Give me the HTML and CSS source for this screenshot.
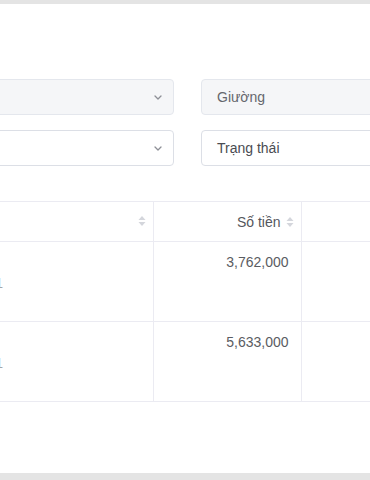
FILE: index.html
```html
<!DOCTYPE html>
<html lang="vi">
<head>
    <meta charset="UTF-8">
    <meta name="viewport" content="width=device-width, initial-scale=1.0">
    <title>Danh sách hóa đơn</title>
    <link rel="stylesheet" href="styles.css">
</head>
<body>
    <div class="page">
        <div class="bar-top"></div>
        <div class="main">
            <div class="filters">
                <div class="select disabled">
                    <span class="select-text"></span>
                    <svg class="chevron" width="8" height="5" viewBox="0 0 8 5"><path d="M1 1l3 3 3-3" fill="none" stroke="#8d8f96" stroke-width="1.3" stroke-linecap="round" stroke-linejoin="round"/></svg>
                </div>
                <div class="select disabled">
                    <span class="select-text muted">Giường</span>
                </div>
                <div class="select">
                    <span class="select-text"></span>
                    <svg class="chevron" width="8" height="5" viewBox="0 0 8 5"><path d="M1 1l3 3 3-3" fill="none" stroke="#8d8f96" stroke-width="1.3" stroke-linecap="round" stroke-linejoin="round"/></svg>
                </div>
                <div class="select">
                    <span class="select-text">Trạng thái</span>
                </div>
            </div>

            <table class="bills">
                <colgroup>
                    <col class="col-room">
                    <col class="col-amount">
                    <col class="col-rest">
                </colgroup>
                <thead>
                    <tr>
                        <th class="th-left">
                            <span class="th-inner">
                                <svg class="caret" width="8" height="12" viewBox="0 0 8 12"><path d="M4 1L7.5 5H0.5Z" fill="#d4d6dc"/><path d="M0.5 7H7.5L4 11Z" fill="#d4d6dc"/></svg>
                            </span>
                        </th>
                        <th class="th-right">
                            <span class="th-inner">Số tiền
                                <svg class="caret" width="8" height="12" viewBox="0 0 8 12"><path d="M4 1L7.5 5H0.5Z" fill="#d4d6dc"/><path d="M0.5 7H7.5L4 11Z" fill="#d4d6dc"/></svg>
                            </span>
                        </th>
                        <th></th>
                    </tr>
                </thead>
                <tbody>
                    <tr>
                        <td><div class="line-main"></div><div class="line-sub">10/11/2021</div></td>
                        <td class="num">3,762,000</td>
                        <td></td>
                    </tr>
                    <tr>
                        <td><div class="line-main"></div><div class="line-sub">10/11/2021</div></td>
                        <td class="num">5,633,000</td>
                        <td></td>
                    </tr>
                </tbody>
            </table>
        </div>
        <div class="bar-bottom"></div>
    </div>
</body>
</html>
```

FILE: styles.css
```css
body {
    margin: 0;
    font-family: "Liberation Sans", Arial, sans-serif;
    font-size: 14px;
    color: #606266;
    background: #fff;
    overflow: hidden;
}
.page {
    height: 480px;
    display: flex;
    flex-direction: column;
}
.bar-top {
    height: 4px;
    background: #e4e4e4;
}
.bar-bottom {
    height: 7px;
    background: #e4e4e4;
}
.main {
    flex: 1;
    padding-top: 75px;
    overflow: hidden;
}
.filters {
    display: grid;
    grid-template-columns: 364px 364px;
    column-gap: 27px;
    row-gap: 15px;
    margin-left: -190px;
}
.select {
    height: 36px;
    box-sizing: border-box;
    border: 1px solid #dcdfe6;
    border-radius: 4px;
    background: #fff;
    display: flex;
    align-items: center;
    padding: 0 11px 0 15px;
}
.select.disabled {
    background: #f5f6f8;
    border-color: #e4e7ed;
}
.select-text {
    flex: 1;
    color: #4a4c52;
}
.select-text.muted {
    color: #65676d;
}
.chevron {
    display: block;
}
.bills {
    margin-top: 35px;
    margin-left: -76px;
    border-collapse: collapse;
    table-layout: fixed;
    width: 600px;
    border-top: 1px solid #ebebf2;
    border-bottom: 1px solid #f0f0f4;
}
.col-room {
    width: 229px;
}
.col-amount {
    width: 148px;
}
.bills th,
.bills td {
    border-bottom: 1px solid #ebebf2;
    border-right: 1px solid #ebebf2;
    padding: 0;
}
.bills th {
    height: 39px;
    font-weight: normal;
    color: #55575d;
    padding: 0 7px 0 10px;
}
.th-left {
    text-align: right;
}
.th-right {
    text-align: right;
}
.th-inner {
    display: inline-flex;
    align-items: center;
    gap: 5px;
}
.caret {
    display: block;
}
.bills td {
    height: 80px;
    vertical-align: top;
    padding: 10px 12px 0 10px;
    box-sizing: border-box;
    line-height: 21px;
    color: #5a5c62;
}
.bills td.num {
    text-align: right;
}
.line-main {
    height: 21px;
}
.line-sub {
    color: #a3a5ab;
}
```
